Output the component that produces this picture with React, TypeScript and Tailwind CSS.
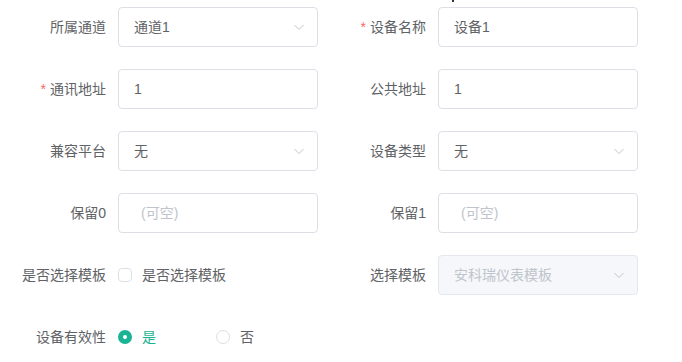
import React from 'react';

const font = { fontFamily: '"Liberation Sans", "Noto Sans CJK SC", sans-serif' };

function Chevron({ className = '' }: { className?: string }) {
  return (
    <svg width="14" height="14" viewBox="0 0 14 14" className={className}>
      <path d="M2.5 5 L7 9.5 L11.5 5" fill="none" stroke="currentColor" strokeWidth="1" />
    </svg>
  );
}

function Label({ text, required }: { text: string; required?: boolean }) {
  return (
    <label className="w-[118px] shrink-0 pr-3 text-right text-sm leading-10 text-[#606266]">
      {required && <span className="mr-1 text-[#F56C6C]">*</span>}
      {text}
    </label>
  );
}

function TextInput({ value, placeholder }: { value?: string; placeholder?: string }) {
  return (
    <div className="flex h-10 w-[200px] items-center rounded border border-[#DCDFE6] bg-white px-[15px] text-sm">
      {value ? (
        <span className="text-[#606266]">{value}</span>
      ) : (
        <span className="ml-[7px] text-[#C0C4CC]">{placeholder}</span>
      )}
    </div>
  );
}

function Select({ value, disabled }: { value: string; disabled?: boolean }) {
  return (
    <div
      className={
        disabled
          ? 'flex h-10 w-[200px] items-center justify-between rounded border border-[#E4E7ED] bg-[#F5F7FA] pl-[15px] pr-[11px] text-sm'
          : 'flex h-10 w-[200px] items-center justify-between rounded border border-[#DCDFE6] bg-white pl-[15px] pr-[11px] text-sm'
      }
    >
      <span className={disabled ? 'text-[#C0C4CC]' : 'text-[#606266]'}>{value}</span>
      <Chevron className="text-[#C0C4CC]" />
    </div>
  );
}

function Item({ label, required, children }: { label: string; required?: boolean; children: React.ReactNode }) {
  return (
    <div className="flex h-10 w-[320px] items-center">
      <Label text={label} required={required} />
      {children}
    </div>
  );
}

export default function App() {
  return (
    <div className="relative h-[362px] w-[682px] bg-white pt-[7px]" style={font}>
      <div className="absolute left-[452px] top-0 h-[2px] w-[2px] bg-[#303133]" />
      <div className="flex flex-col gap-[22px]">
        <div className="flex">
          <Item label="所属通道">
            <Select value="通道1" />
          </Item>
          <Item label="设备名称" required>
            <TextInput value="设备1" />
          </Item>
        </div>
        <div className="flex">
          <Item label="通讯地址" required>
            <TextInput value="1" />
          </Item>
          <Item label="公共地址">
            <TextInput value="1" />
          </Item>
        </div>
        <div className="flex">
          <Item label="兼容平台">
            <Select value="无" />
          </Item>
          <Item label="设备类型">
            <Select value="无" />
          </Item>
        </div>
        <div className="flex">
          <Item label="保留0">
            <TextInput placeholder="(可空)" />
          </Item>
          <Item label="保留1">
            <TextInput placeholder="(可空)" />
          </Item>
        </div>
        <div className="flex">
          <Item label="是否选择模板">
            <div className="flex items-center text-sm text-[#606266]">
              <span className="h-[14px] w-[14px] rounded-sm border border-[#DCDFE6] bg-white" />
              <span className="pl-[10px]">是否选择模板</span>
            </div>
          </Item>
          <Item label="选择模板">
            <Select value="安科瑞仪表模板" disabled />
          </Item>
        </div>
        <div className="flex">
          <Item label="设备有效性">
            <div className="flex items-center text-sm">
              <div className="flex w-[98px] items-center">
                <span className="flex h-[14px] w-[14px] items-center justify-center rounded-full bg-[#1AB394]">
                  <span className="h-1 w-1 rounded-full bg-white" />
                </span>
                <span className="pl-[10px] text-[#1AB394]">是</span>
              </div>
              <div className="flex items-center">
                <span className="h-[14px] w-[14px] rounded-full border border-[#DCDFE6] bg-white" />
                <span className="pl-[10px] text-[#606266]">否</span>
              </div>
            </div>
          </Item>
        </div>
      </div>
    </div>
  );
}
